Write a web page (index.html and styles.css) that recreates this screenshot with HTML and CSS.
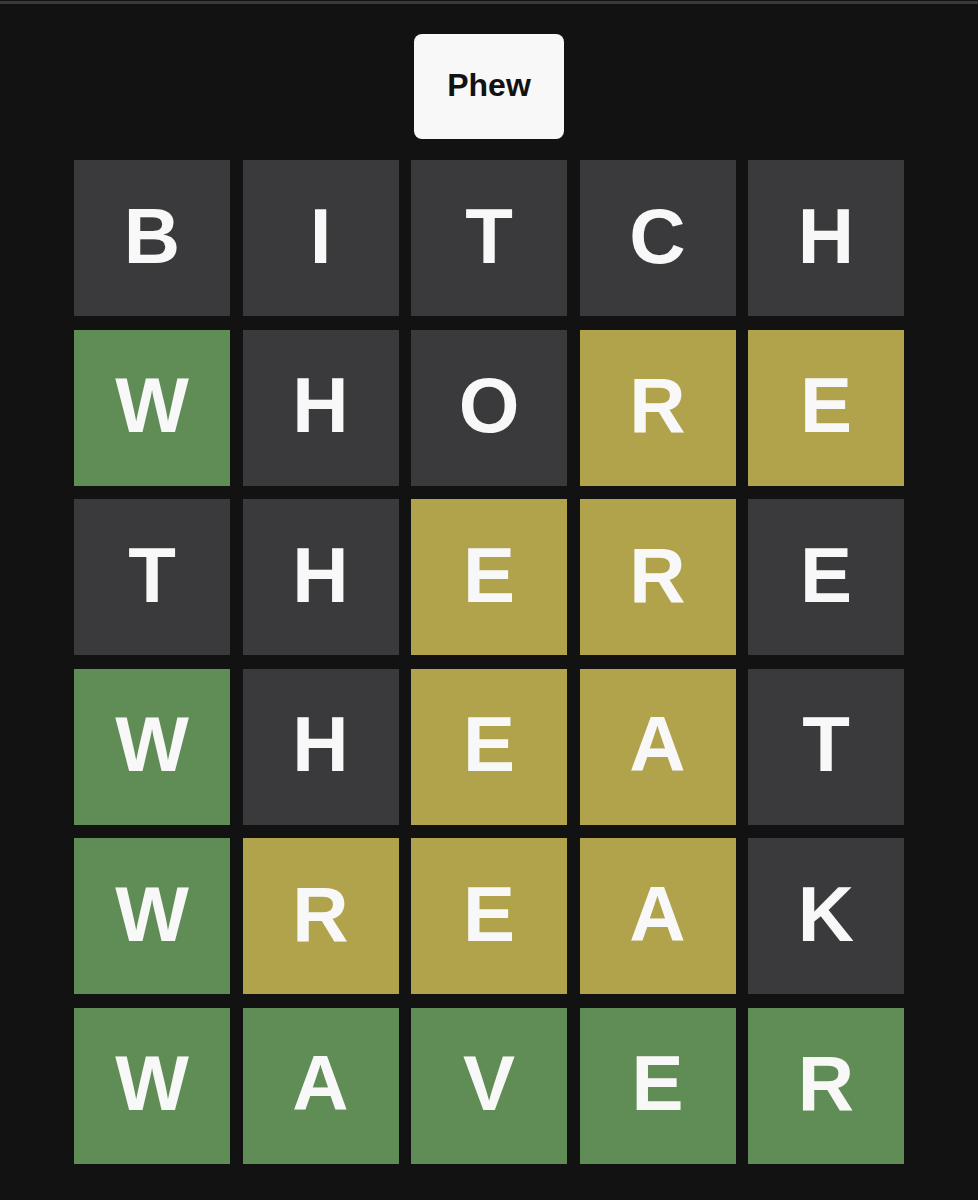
FILE: index.html
```html
<!DOCTYPE html>
<html lang="en">
<head>
    <meta charset="UTF-8">
    <meta name="viewport" content="width=device-width, initial-scale=1.0">
    <title>Wordle</title>
    <link rel="stylesheet" href="styles.css">
</head>
<body>
    <div class="topbar"></div>
    <div class="toast">Phew</div>
    <div class="board">
        <div class="tile absent">B</div>
        <div class="tile absent">I</div>
        <div class="tile absent">T</div>
        <div class="tile absent">C</div>
        <div class="tile absent">H</div>

        <div class="tile correct">W</div>
        <div class="tile absent">H</div>
        <div class="tile absent">O</div>
        <div class="tile present">R</div>
        <div class="tile present">E</div>

        <div class="tile absent">T</div>
        <div class="tile absent">H</div>
        <div class="tile present">E</div>
        <div class="tile present">R</div>
        <div class="tile absent">E</div>

        <div class="tile correct">W</div>
        <div class="tile absent">H</div>
        <div class="tile present">E</div>
        <div class="tile present">A</div>
        <div class="tile absent">T</div>

        <div class="tile correct">W</div>
        <div class="tile present">R</div>
        <div class="tile present">E</div>
        <div class="tile present">A</div>
        <div class="tile absent">K</div>

        <div class="tile correct">W</div>
        <div class="tile correct">A</div>
        <div class="tile correct">V</div>
        <div class="tile correct">E</div>
        <div class="tile correct">R</div>
    </div>
</body>
</html>
```

FILE: styles.css
```css
body {
    font-family: "Liberation Sans", Arial, sans-serif;
    background-color: #121213;
    margin: 0;
    height: 1200px;
    overflow: hidden;
}
.topbar {
    margin-top: 1px;
    height: 3px;
    background: #3a3a3c;
}
.toast {
    width: 150px;
    height: 105px;
    margin: 30px auto 0;
    background: #f8f8f8;
    color: #121213;
    border-radius: 8px;
    font-size: 32px;
    font-weight: bold;
    display: flex;
    align-items: center;
    justify-content: center;
    padding-bottom: 3px;
    box-sizing: border-box;
}
.board {
    display: grid;
    grid-template-columns: repeat(5, 156px);
    grid-auto-rows: 156px;
    column-gap: 12.5px;
    row-gap: 13.5px;
    justify-content: center;
    margin-top: 21px;
}
.tile {
    display: flex;
    align-items: center;
    justify-content: center;
    color: #f8f8f8;
    font-size: 78px;
    font-weight: bold;
    line-height: 1;
    padding-bottom: 5px;
    box-sizing: border-box;
}
.absent {
    background: #3a3a3c;
}
.present {
    background: #b1a24c;
}
.correct {
    background: #608c55;
}
```
